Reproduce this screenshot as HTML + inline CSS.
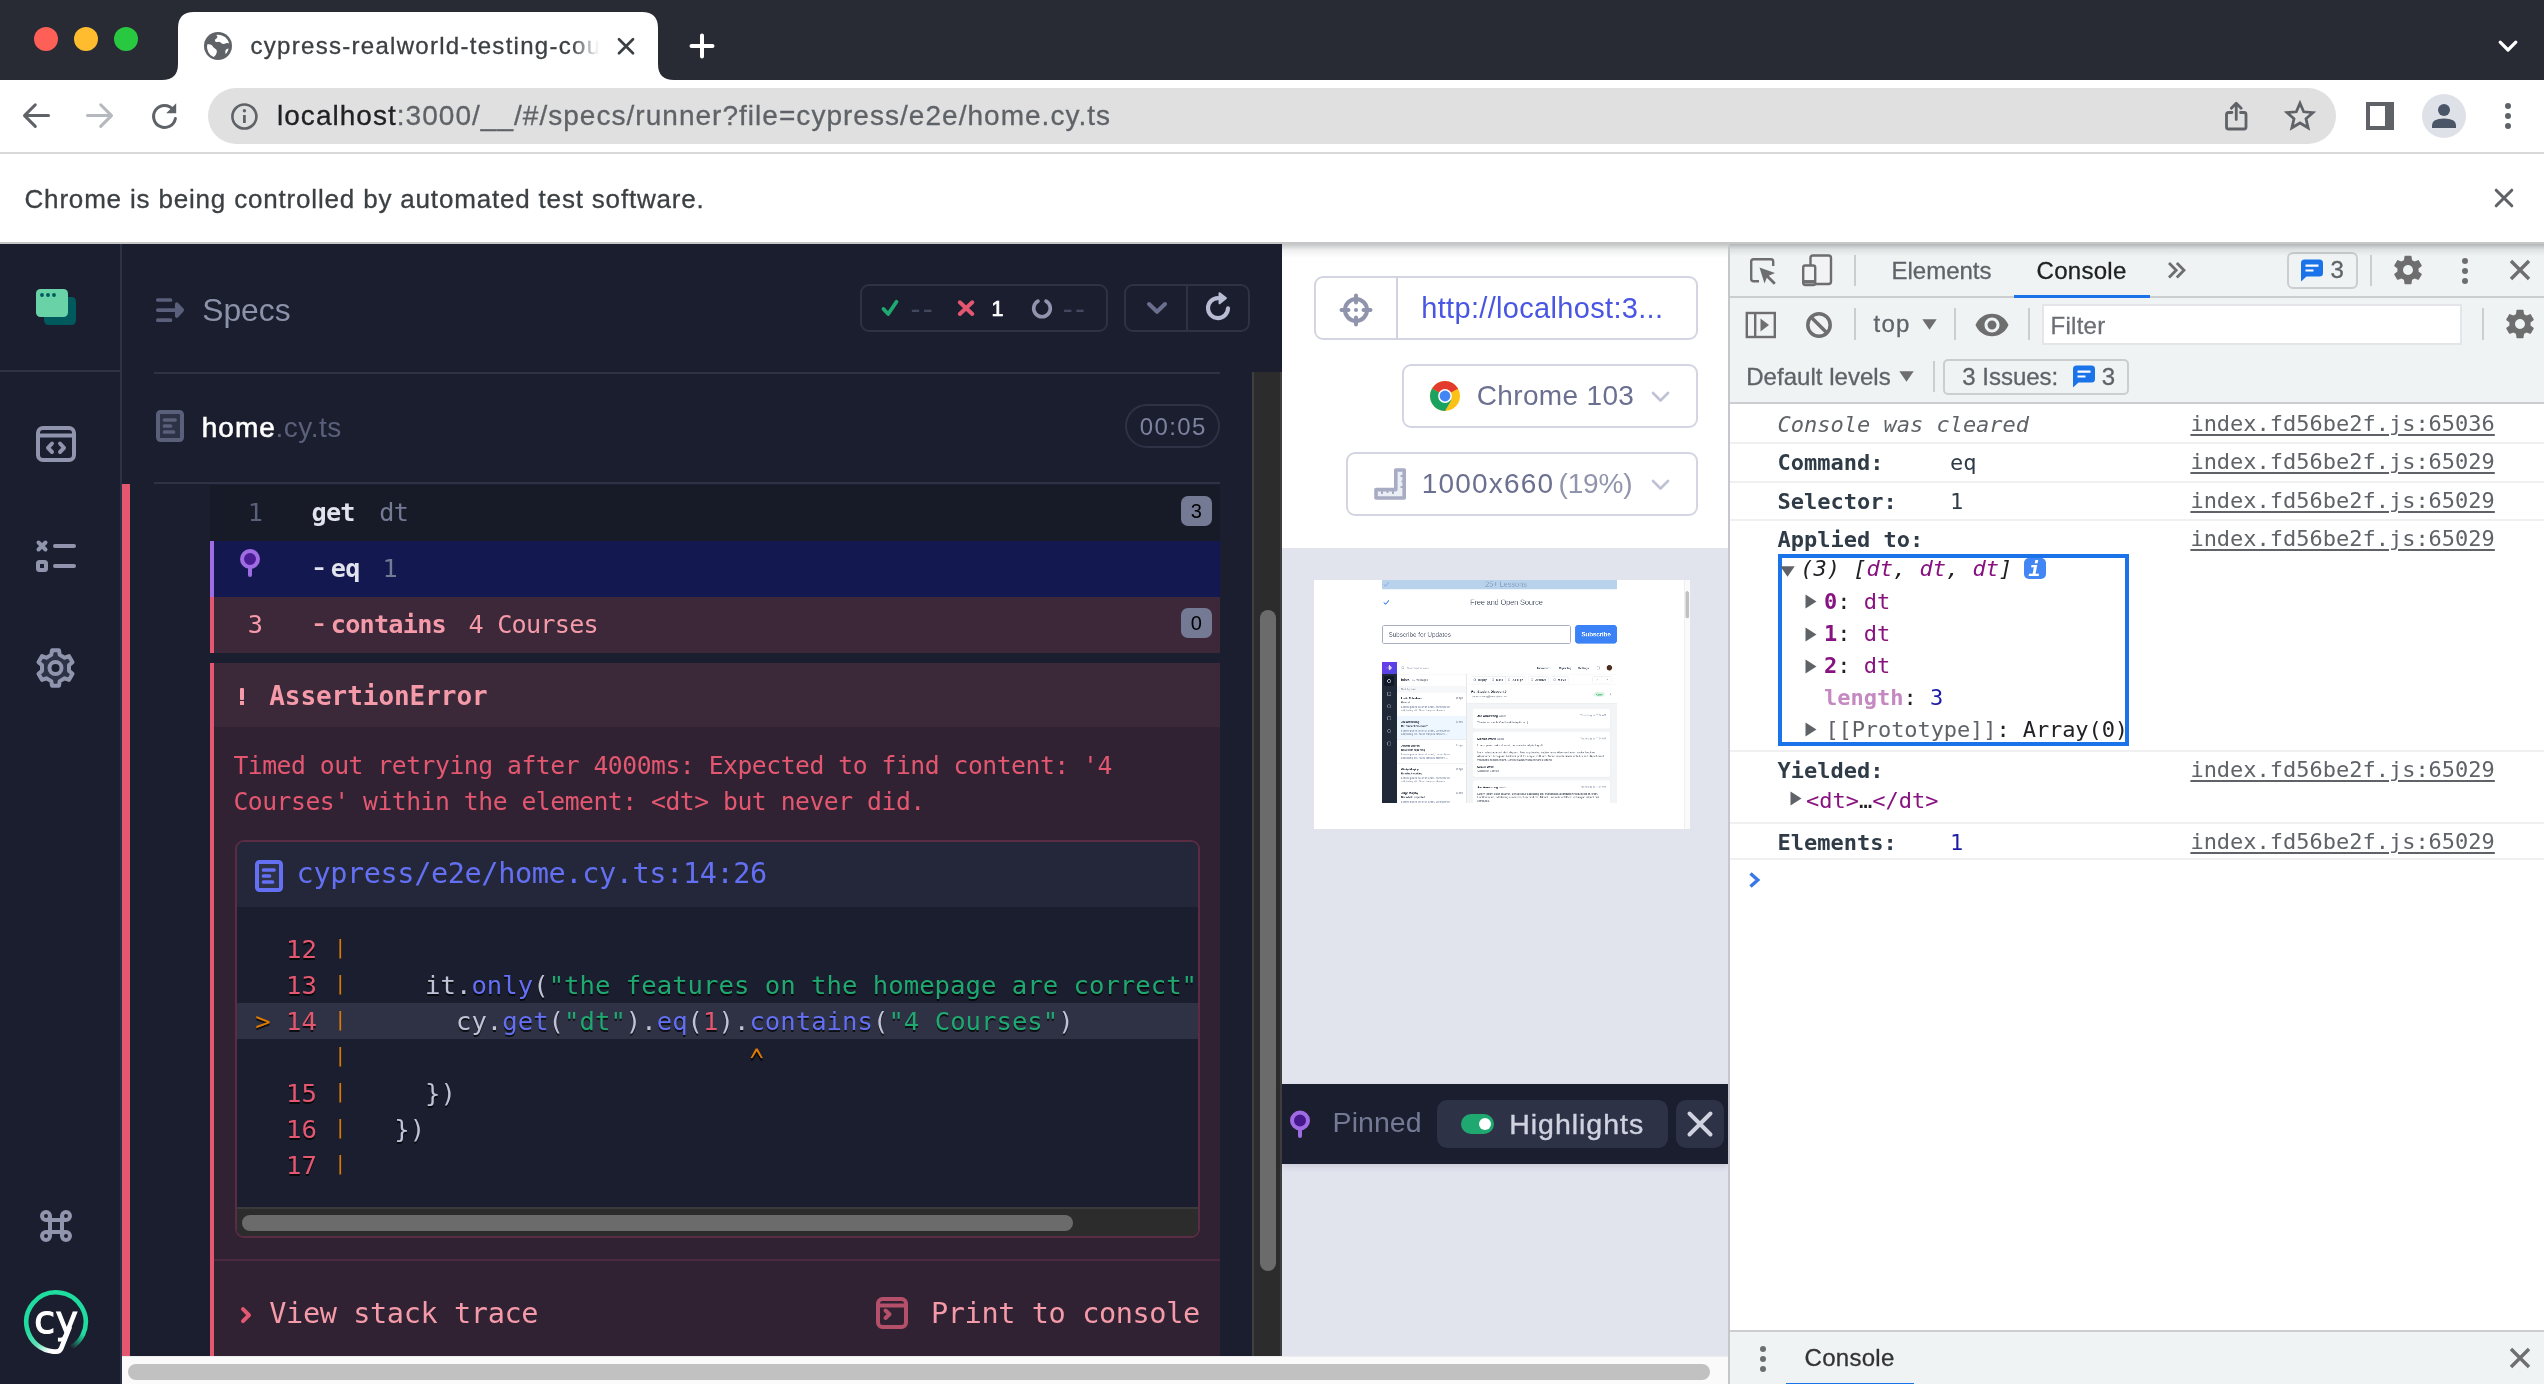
<!DOCTYPE html>
<html lang="en">
<head>
<meta charset="utf-8">
<title>cypress-realworld-testing-course</title>
<style>
*{box-sizing:border-box;margin:0;padding:0}
html,body{width:2544px;height:1384px;overflow:hidden;background:#fff}
body{font-family:"Liberation Sans",Arial,sans-serif;color:#202124}
#root{position:absolute;left:0;top:0;width:2544px;height:1384px;overflow:hidden;will-change:transform;transform:translateZ(0)}
#root div,#root span,#root svg,#root a,#root section,#root header,#root nav,#root aside,#root main,#root footer,#root ul,#root li,#root pre,#root code,#root button,#root h1,#root h2,#root p{position:absolute;display:block}
#root button{border:0;background:none;font:inherit}
.t{white-space:pre;line-height:1;font-weight:400}
.mono{font-family:"DejaVu Sans Mono","Liberation Mono",monospace}
.lmono{font-family:"Liberation Mono","DejaVu Sans Mono",monospace}
.dsans{font-family:"DejaVu Sans","Liberation Sans",sans-serif}
.t span,.t b,.t i{position:static !important;display:inline !important}
.t span.pipe{position:relative !important;font-size:20px;letter-spacing:3.4px;left:1.7px;top:-3.9px;text-shadow:none}
.t span.caret{position:relative !important;display:inline-block !important;top:5.5px;transform:scale(0.9,1.4)}
</style>
</head>
<body>
<div id="root">
<!-- ===== Browser chrome ===== -->
<header id="browser" style="left:0;top:0;width:2544px;height:244px">
<div style="left:0px;top:0px;width:2544px;height:80px;background:#282a34;"></div>
<svg style="left:150px;top:0px;" width="540" height="80" viewBox="0 0 540 80"><path d="M12 80 Q28 80 28 64 L28 28 Q28 12 44 12 L492 12 Q508 12 508 28 L508 64 Q508 80 524 80 Z" fill="#fff"/></svg>
<div style="left:34px;top:27px;width:24px;height:24px;background:#fe5f57;border-radius:50%;"></div>
<div style="left:74px;top:27px;width:24px;height:24px;background:#febc2e;border-radius:50%;"></div>
<div style="left:114px;top:27px;width:24px;height:24px;background:#28c840;border-radius:50%;"></div>
<svg style="left:204px;top:32px;" width="28" height="28" viewBox="0 0 28 28"><circle cx="14" cy="14" r="14" fill="#5f6368"/><path d="M3.2 12.5c2.6-.6 4.6.3 5.6 2.1.9 1.7 2.6 1.9 3.6 3.2 1 1.4.2 3.4-.6 4.9-.5 1-1.2 1.8-2.2 2.4A11.3 11.3 0 0 1 3.2 12.5Z" fill="#fff"/><path d="M11.5 3c1.7.2 2.3 1.6 1.6 2.8-.7 1.2-2.2 1.3-2.2 2.7 0 1.5 2 1.7 3.5 1.4 1.6-.3 2.3.9 3.4 1.7 1.2.9 3 .4 4.300-.3 1.2-.6 2.300-.5 3 .1A11.300 11.300 0 0 0 11.5 3Z" fill="#fff"/><path d="M24.6 16.5c-1.500.2-2.800.9-3.200 2.200-.4 1.300.3 2.300.1 3.500 1.600-1.500 2.700-3.500 3.100-5.700Z" fill="#fff"/></svg>
<span class="t" style="left:250.5px;top:33.98px;font-size:24px;color:#3c4043;letter-spacing:1.29px;-webkit-text-stroke:0.300px #3c4043;">cypress-realworld-testing-cou</span>
<div style="left:572px;top:20px;width:32px;height:52px;background:linear-gradient(90deg,rgba(255,255,255,0),#fff 85%);"></div>
<svg style="left:616px;top:36px;" width="20" height="20" viewBox="0 0 20 20"><path d="M3 3.300 L17 17.300 M17 3.300 L3 17.300" stroke="#3c4043" stroke-width="2.700" fill="none" stroke-linecap="round"/></svg>
<svg style="left:688px;top:32px;" width="28" height="28" viewBox="0 0 28 28"><path d="M14 3.500 V24.500 M3.500 14 H24.500" stroke="#fff" stroke-width="4" fill="none" stroke-linecap="round"/></svg>
<svg style="left:2496px;top:38px;" width="24" height="18" viewBox="0 0 24 18"><path d="M4.200 4.200 L12 12 L19.800 4.200" stroke="#fff" stroke-width="3.200" fill="none" stroke-linecap="round" stroke-linejoin="round"/></svg>
<div style="left:0px;top:80px;width:2544px;height:72px;background:#fff;"></div>
<div style="left:0px;top:152px;width:2544px;height:2px;background:#d9d9d9;"></div>
<svg style="left:20px;top:100px;" width="32" height="32" viewBox="0 0 32 32"><path d="M28.500 15.600 H5 M15.300 4.800 L4.500 15.600 L15.300 26.400" stroke="#5f6368" stroke-width="3" fill="none" stroke-linecap="round" stroke-linejoin="round"/></svg>
<svg style="left:84px;top:100px;" width="32" height="32" viewBox="0 0 32 32"><path d="M3.500 15.600 H27 M16.700 4.800 L27.500 15.600 L16.700 26.400" stroke="#b5b8bc" stroke-width="3" fill="none" stroke-linecap="round" stroke-linejoin="round"/></svg>
<svg style="left:148px;top:100px;" width="34" height="34" viewBox="0 0 34 34"><path d="M25.200 9.600 A11 11 0 1 0 27.400 18.500" stroke="#5f6368" stroke-width="3" fill="none" stroke-linecap="round"/><path d="M28.200 3.200 V13.200 H18.200 Z" fill="#5f6368"/></svg>
<div style="left:208px;top:88px;width:2128px;height:56px;background:#e0e0e0;border-radius:28px;"></div>
<svg style="left:229px;top:101px;" width="31" height="31" viewBox="0 0 31 31"><circle cx="15.400" cy="15.500" r="12" stroke="#5f6368" stroke-width="2.600" fill="none"/><path d="M15.400 14 V22" stroke="#5f6368" stroke-width="2.800"/><circle cx="15.400" cy="9.800" r="1.700" fill="#5f6368"/></svg>
<span class="t" style="left:277px;top:102.1px;font-size:28px;color:#5f6368;letter-spacing:1.03px;-webkit-text-stroke:0.300px;"><span style="color:#202124">localhost</span>:3000/__/#/specs/runner?file=cypress/e2e/home.cy.ts</span>
<svg style="left:2222px;top:100px;" width="30" height="32" viewBox="0 0 30 32"><path d="M10 12.500 H6.500 Q4.500 12.500 4.500 14.500 V27 Q4.500 29 6.500 29 H22 Q24 29 24 27 V14.500 Q24 12.500 22 12.500 H18.500" stroke="#5f6368" stroke-width="2.800" fill="none" stroke-linecap="round"/><path d="M14.250 19.500 V4 M9.300 8.300 L14.250 3.300 L19.200 8.300" stroke="#5f6368" stroke-width="2.800" fill="none" stroke-linecap="round" stroke-linejoin="round"/></svg>
<svg style="left:2284px;top:100px;" width="32" height="32" viewBox="0 0 32 32"><path d="M16 3.200 L19.700 11.800 L29 12.600 L22 18.700 L24.100 27.800 L16 23 L7.900 27.800 L10 18.700 L3 12.600 L12.300 11.800 Z" stroke="#5f6368" stroke-width="2.800" fill="none" stroke-linejoin="miter"/></svg>
<div style="left:2366px;top:102px;width:28px;height:28px;background:#5f6368;"></div>
<div style="left:2370px;top:106px;width:14.5px;height:20px;background:#fff;"></div>
<div style="left:2422px;top:94px;width:44px;height:44px;background:#dfe1e8;border-radius:50%;"></div>
<svg style="left:2422px;top:94px;" width="44" height="44" viewBox="0 0 44 44"><circle cx="22" cy="16" r="6" fill="#4a5568"/><path d="M10 34 V31 Q10 24.500 22 24.500 Q34 24.500 34 31 V34 Z" fill="#4a5568"/></svg>
<div style="left:2505px;top:103px;width:6px;height:6px;background:#5f6368;border-radius:50%;"></div>
<div style="left:2505px;top:113px;width:6px;height:6px;background:#5f6368;border-radius:50%;"></div>
<div style="left:2505px;top:123px;width:6px;height:6px;background:#5f6368;border-radius:50%;"></div>
<div style="left:0px;top:154px;width:2544px;height:88px;background:#fff;"></div>
<span class="t" style="left:24.5px;top:185.99px;font-size:26px;color:#3c4043;letter-spacing:0.82px;-webkit-text-stroke:0.300px #3c4043;">Chrome is being controlled by automated test software.</span>
<svg style="left:2492px;top:186px;" width="24" height="24" viewBox="0 0 24 24"><path d="M4.200 4.200 L19.800 19.800 M19.800 4.200 L4.200 19.800" stroke="#5f6368" stroke-width="3" fill="none" stroke-linecap="round"/></svg>
<div style="left:0px;top:242px;width:2544px;height:2px;background:#c6c6c6;"></div>
</header>
<!-- ===== Cypress app ===== -->
<main id="cy-reporter" style="left:0;top:0;width:1282px;height:1356px">
<div style="left:122px;top:244px;width:1160px;height:1112px;background:#1b1e2e;"></div>
<svg style="left:152px;top:294px;" width="36" height="32" viewBox="0 0 36 32"><path d="M5.800 6 H18.500 M5.800 26.200 H18.500 M5.800 16.100 H29" stroke="#5a5f7a" stroke-width="3.700" stroke-linecap="round" fill="none"/><path d="M24.800 10.200 L30.300 16.100 L24.800 22 Z" stroke="#5a5f7a" stroke-width="3.700" stroke-linecap="round" stroke-linejoin="round" fill="#5a5f7a"/></svg>
<span class="t" style="left:202.2px;top:295.28px;font-size:31.8px;color:#8d92ab;letter-spacing:0.02px;">Specs</span>
<div style="left:860px;top:284px;width:248px;height:48px;border:2px solid #2e3247;border-radius:9px;"></div>
<svg style="left:878px;top:296px;" width="24" height="24" viewBox="0 0 24 24"><path d="M5.500 13 L10.200 18 L18.500 5.800" stroke="#1fa971" stroke-width="3.800" fill="none" stroke-linecap="round" stroke-linejoin="round"/></svg>
<span class="t" style="left:910.6px;top:294px;font-size:30px;color:#434861;letter-spacing:2.2px;">--</span>
<svg style="left:954px;top:296px;" width="24" height="24" viewBox="0 0 24 24"><path d="M5.800 6.300 L18.300 18 M18.300 6.300 L5.800 18" stroke="#e45770" stroke-width="4" fill="none" stroke-linecap="round"/></svg>
<span class="t" style="left:991.6px;top:298.9px;font-size:21.5px;color:#fff;-webkit-text-stroke:0.700px #fff;">1</span>
<svg style="left:1030px;top:296px;" width="24" height="24" viewBox="0 0 24 24"><path d="M8 5.200 A8.300 8.300 0 1 0 16 5.200" stroke="#9095ad" stroke-width="3.600" fill="none" stroke-linecap="round"/></svg>
<span class="t" style="left:1062.8px;top:294px;font-size:30px;color:#434861;letter-spacing:2.2px;">--</span>
<div style="left:1124px;top:284px;width:126px;height:48px;border:2px solid #2e3247;border-radius:9px;"></div>
<div style="left:1186px;top:286px;width:2px;height:44px;background:#2e3247;"></div>
<svg style="left:1144px;top:296px;" width="26" height="24" viewBox="0 0 26 24"><path d="M5 8 L13 15.800 L21 8" stroke="#6a6f8d" stroke-width="4" fill="none" stroke-linecap="round" stroke-linejoin="round"/></svg>
<svg style="left:1202px;top:290px;" width="34" height="34" viewBox="0 0 34 34"><path d="M16 8.100 A10 10 0 1 0 26 18.300" stroke="#b8bcd4" stroke-width="4.100" fill="none" stroke-linecap="round"/><path d="M17.600 3.400 L23.800 8.100 L17.600 13.200 Z" fill="#b8bcd4" stroke="#b8bcd4" stroke-width="2.200" stroke-linejoin="round"/></svg>
<div style="left:154px;top:372px;width:1066px;height:2px;background:#2e3247;"></div>
<svg style="left:154px;top:408px;" width="32" height="36" viewBox="0 0 32 36"><rect x="4" y="4" width="24" height="28" rx="2.500" stroke="#5a5f7a" stroke-width="4" fill="#2e3247"/><path d="M10.500 12 H21 M10.500 18 H16.500 M10.500 24 H19.500" stroke="#5a5f7a" stroke-width="3.700" stroke-linecap="round"/></svg>
<span class="t" style="left:201.8px;top:414.1px;font-size:28px;color:#fff;letter-spacing:0.99px;-webkit-text-stroke:0.600px #fff;">home</span>
<span class="t" style="left:275.6px;top:414.1px;font-size:28px;color:#5a5f7a;letter-spacing:0.46px;">.cy.ts</span>
<div style="left:1125px;top:404px;width:95px;height:44px;border:2px solid #2e3247;border-radius:22px;"></div>
<span class="t" style="left:1139.8px;top:414.58px;font-size:24px;color:#7d829f;letter-spacing:1.39px;">00:05</span>
<div style="left:154px;top:482px;width:1066px;height:2px;background:#2e3247;"></div>
<div style="left:122px;top:484px;width:8px;height:872px;background:#e45770;"></div>
<div style="left:210px;top:485px;width:1010px;height:56px;background:#171a27;"></div>
<span class="t mono" style="left:247.8px;top:499.98px;font-size:25.2px;color:#5a5f7a;letter-spacing:-0.77px;">1</span>
<span class="t mono" style="left:311.5px;top:499.98px;font-size:25.2px;color:#e1e3ed;font-weight:700;letter-spacing:-0.77px;">get</span>
<span class="t mono" style="left:379.3px;top:499.98px;font-size:25.2px;color:#747994;letter-spacing:-0.77px;">dt</span>
<div style="left:1181px;top:495.6px;width:31px;height:30px;background:#747994;border-radius:7px;"></div>
<span class="t" style="left:1190.8px;top:500.57px;font-size:20px;color:#000;">3</span>
<div style="left:210px;top:541px;width:1010px;height:56px;background:#141850;"></div>
<div style="left:210px;top:541px;width:4px;height:56px;background:#a06ce4;"></div>
<svg style="left:236px;top:545px;" width="28" height="36" viewBox="0 0 28 36"><circle cx="14" cy="14" r="8" stroke="#a06ce4" stroke-width="4" fill="#4b1d94"/><path d="M14 24 V30" stroke="#a06ce4" stroke-width="4" stroke-linecap="round"/></svg>
<span class="t mono" style="left:309px;top:549.86px;font-size:33.5px;color:#e1e3ed;">-</span>
<span class="t mono" style="left:330.8px;top:555.98px;font-size:25.2px;color:#e1e3ed;font-weight:700;letter-spacing:-0.77px;">eq</span>
<span class="t mono" style="left:382.6px;top:555.98px;font-size:25.2px;color:#747994;letter-spacing:-0.77px;">1</span>
<div style="left:210px;top:597px;width:1010px;height:56px;background:#3c2839;"></div>
<div style="left:210px;top:597px;width:4px;height:56px;background:#e45770;"></div>
<span class="t mono" style="left:247.8px;top:611.98px;font-size:25.2px;color:#f59aa9;letter-spacing:-0.77px;">3</span>
<span class="t mono" style="left:309px;top:605.86px;font-size:33.5px;color:#f59aa9;">-</span>
<span class="t mono" style="left:330.8px;top:611.98px;font-size:25.2px;color:#f59aa9;font-weight:700;letter-spacing:-0.77px;">contains</span>
<span class="t mono" style="left:468.4px;top:611.98px;font-size:25.2px;color:#f59aa9;letter-spacing:-0.77px;">4 Courses</span>
<div style="left:1181px;top:607.6px;width:31px;height:30px;background:#747994;border-radius:7px;"></div>
<span class="t" style="left:1190.8px;top:612.57px;font-size:20px;color:#000;">0</span>
<section id="cy-error" style="left:210px;top:663px;width:1010px;height:693px">
<div style="left:0px;top:0px;width:1010px;height:64px;background:#3b2839;"></div>
<div style="left:0px;top:64px;width:1010px;height:629px;background:#302232;"></div>
<div style="left:0px;top:0px;width:4px;height:693px;background:#e45770;"></div>
<div style="left:30.2px;top:25.2px;width:4.2px;height:11.5px;background:#f59aa9;border-radius:1px;"></div>
<div style="left:30.2px;top:38.4px;width:4.2px;height:3.6px;background:#f59aa9;"></div>
<span class="t mono" style="left:59.2px;top:19.8px;font-size:26px;color:#f59aa9;font-weight:700;letter-spacing:-0.05px;">AssertionError</span>
<p class="t mono" style="left:23.4px;top:91.09px;font-size:24.72px;color:#e45770;letter-spacing:-0.48px;">Timed out retrying after 4000ms: Expected to find content: '4</p>
<p class="t mono" style="left:23.4px;top:127.19px;font-size:24.72px;color:#e45770;letter-spacing:-0.48px;">Courses' within the element: &lt;dt&gt; but never did.</p>
<div style="left:4px;top:596px;width:1006px;height:2px;background:#4b2a41;"></div>
<svg style="left:24px;top:640px;" width="24" height="24" viewBox="0 0 24 24"><path d="M9 6.200 L15 12.200 L9 18.200" stroke="#e45770" stroke-width="4" fill="none" stroke-linecap="round" stroke-linejoin="round"/></svg>
<span class="t mono" style="left:59.3px;top:635.84px;font-size:28.56px;color:#f59aa9;letter-spacing:-0.39px;">View stack trace</span>
<svg style="left:664px;top:632px;" width="36" height="36" viewBox="0 0 36 36"><rect x="4" y="4" width="28" height="28" rx="4.500" stroke="#b5506a" stroke-width="4" fill="none"/><path d="M4 10.500 H32" stroke="#b5506a" stroke-width="4"/><path d="M11.500 15.500 L15.500 19.300 L11.500 23" stroke="#b5506a" stroke-width="4" fill="none" stroke-linecap="round" stroke-linejoin="round"/></svg>
<span class="t mono" style="left:721px;top:636.24px;font-size:28.56px;color:#f59aa9;letter-spacing:-0.39px;">Print to console</span>
</section>
<section id="cy-codeframe" style="left:235px;top:840px;width:965px;height:398px;border:2px solid #5a2d45;border-radius:9px;overflow:hidden;background:#1b1e2e">
<div style="left:0px;top:0px;width:961px;height:65px;background:#242739;"></div>
<svg style="left:16px;top:16px;" width="32" height="36" viewBox="0 0 32 36"><rect x="4" y="4" width="24" height="28" rx="2.500" stroke="#6470f3" stroke-width="4" fill="#2e3247"/><path d="M10.500 12 H21 M10.500 18 H16.500 M10.500 24 H19.500" stroke="#6470f3" stroke-width="3.700" stroke-linecap="round"/></svg>
<span class="t mono" style="left:59.6px;top:17.14px;font-size:28.56px;color:#6470f3;letter-spacing:-0.39px;">cypress/e2e/home.cy.ts:14:26</span>
<pre style="left:0;top:65px;width:961px;height:300px;overflow:hidden">
<div style="left:0px;top:96px;width:961px;height:36px;background:#2f3244;"></div>
<code class="t mono" style="left:18.2px;top:29.53px;font-size:25.61px;color:#bfc3d6;letter-spacing:0.02px;text-shadow:0 2px 0 rgba(0,0,0,0.700);"><span style="color:#db7903"> </span> <span style="color:#e45770">12</span> <span class="pipe" style="color:#db7903">|</span></code>
<code class="t mono" style="left:18.2px;top:65.53px;font-size:25.61px;color:#bfc3d6;letter-spacing:0.02px;text-shadow:0 2px 0 rgba(0,0,0,0.700);"><span style="color:#db7903"> </span> <span style="color:#e45770">13</span> <span class="pipe" style="color:#db7903">|</span>     it.<span style="color:#6470f3">only</span>(<span style="color:#1fa971">"the features on the homepage are correct"</span>, () =&gt; {</code>
<code class="t mono" style="left:18.2px;top:101.53px;font-size:25.61px;color:#bfc3d6;letter-spacing:0.02px;text-shadow:0 2px 0 rgba(0,0,0,0.700);"><span style="color:#db7903">&gt;</span> <span style="color:#e45770">14</span> <span class="pipe" style="color:#db7903">|</span>       cy.<span style="color:#6470f3">get</span>(<span style="color:#1fa971">"dt"</span>).<span style="color:#6470f3">eq</span>(<span style="color:#e45770">1</span>).<span style="color:#6470f3">contains</span>(<span style="color:#1fa971">"4 Courses"</span>)</code>
<code class="t mono" style="left:18.2px;top:137.53px;font-size:25.61px;color:#bfc3d6;letter-spacing:0.02px;text-shadow:0 2px 0 rgba(0,0,0,0.700);"><span style="color:#db7903"> </span> <span style="color:#e45770">  </span> <span class="pipe" style="color:#db7903">|</span>                          <span class="caret" style="color:#db7903">^</span></code>
<code class="t mono" style="left:18.2px;top:173.53px;font-size:25.61px;color:#bfc3d6;letter-spacing:0.02px;text-shadow:0 2px 0 rgba(0,0,0,0.700);"><span style="color:#db7903"> </span> <span style="color:#e45770">15</span> <span class="pipe" style="color:#db7903">|</span>     })</code>
<code class="t mono" style="left:18.2px;top:209.53px;font-size:25.61px;color:#bfc3d6;letter-spacing:0.02px;text-shadow:0 2px 0 rgba(0,0,0,0.700);"><span style="color:#db7903"> </span> <span style="color:#e45770">16</span> <span class="pipe" style="color:#db7903">|</span>   })</code>
<code class="t mono" style="left:18.2px;top:245.53px;font-size:25.61px;color:#bfc3d6;letter-spacing:0.02px;text-shadow:0 2px 0 rgba(0,0,0,0.700);"><span style="color:#db7903"> </span> <span style="color:#e45770">17</span> <span class="pipe" style="color:#db7903">|</span></code>
</pre>
<div style="left:0px;top:365px;width:961px;height:31px;background:#2c2c2c;border-top:2px solid #3a3a3a;"></div>
<div style="left:4.8px;top:373px;width:831.5px;height:16px;background:#6b6b6b;border-radius:8px;"></div>
</section>
<div style="left:1252px;top:372px;width:30px;height:984px;background:#2c2c2c;border-left:2px solid #3f3f3f;border-right:2px solid #3f3f3f;"></div>
<div style="left:1260px;top:610px;width:16px;height:661px;background:#6b6b6b;border-radius:8px;"></div>
</main>
<nav id="cy-sidebar" style="left:0;top:244px;width:122px;height:1140px">
<div style="left:0px;top:0px;width:122px;height:1140px;background:#1b1e2e;"></div>
<div style="left:120px;top:0px;width:2px;height:1140px;background:#2e3247;"></div>
<div style="left:0px;top:126px;width:120px;height:2px;background:#2e3247;"></div>
<svg style="left:34px;top:43px;" width="44" height="40" viewBox="0 0 44 40"><rect x="10" y="10" width="32" height="28" rx="4.500" fill="#00595d"/><rect x="2" y="2" width="32" height="28" rx="4.500" fill="#69d3a7"/><circle cx="8" cy="8" r="1.900" fill="#00595d"/><circle cx="14" cy="8" r="1.900" fill="#00595d"/><circle cx="20" cy="8" r="1.900" fill="#00595d"/></svg>
<svg style="left:34px;top:180px;" width="44" height="40" viewBox="0 0 44 40"><rect x="4" y="4" width="36" height="32" rx="5" stroke="#9095ad" stroke-width="4" fill="none"/><path d="M4 11.500 H40" stroke="#9095ad" stroke-width="4"/><path d="M18 19.500 L14 23.800 L18 28 M26 19.500 L30 23.800 L26 28" stroke="#9095ad" stroke-width="4" fill="none" stroke-linecap="round" stroke-linejoin="round"/></svg>
<svg style="left:32px;top:292px;" width="48" height="40" viewBox="0 0 48 40"><path d="M6.500 6.500 L13.500 13.500 M13.500 6.500 L6.500 13.500" stroke="#9095ad" stroke-width="4" stroke-linecap="round"/><path d="M23 10 H42 M23 30 H42" stroke="#9095ad" stroke-width="4" stroke-linecap="round"/><rect x="6" y="26" width="8" height="8" rx="1.500" stroke="#9095ad" stroke-width="4" fill="none"/></svg>
<svg style="left:32px;top:400px;" width="48" height="48" viewBox="0 0 48 48"><path d="M19.24 10.88 L20.02 6.34 L26.98 6.34 L27.76 10.88 L32.73 13.74 L37.05 12.15 L40.54 18.19 L37.00 21.13 L37.00 26.87 L40.54 29.81 L37.05 35.85 L32.73 34.26 L27.76 37.12 L26.98 41.66 L20.02 41.66 L19.24 37.12 L14.27 34.26 L9.95 35.85 L6.46 29.81 L10.00 26.87 L10.00 21.13 L6.46 18.19 L9.95 12.15 L14.27 13.74 Z" stroke="#9095ad" stroke-width="4" stroke-linejoin="round" fill="#2e3247"/><circle cx="23.500" cy="24" r="6" stroke="#9095ad" stroke-width="4" fill="#1b1e2e"/></svg>
<svg style="left:36px;top:962px;" width="40" height="40" viewBox="0 0 40 40"><g stroke="#9095ad" stroke-width="4" fill="none"><circle cx="10" cy="10" r="4"/><circle cx="30" cy="10" r="4"/><circle cx="10" cy="30" r="4"/><circle cx="30" cy="30" r="4"/><path d="M14 10 V30 M26 10 V30 M10 14 H30 M10 26 H30"/></g></svg>
<svg style="left:20px;top:1042px;" width="72" height="72" viewBox="0 0 72 72"><defs><linearGradient id="cyg" gradientUnits="userSpaceOnUse" x1="7.300" y1="43.700" x2="33.400" y2="65.600"><stop offset="0" stop-color="#1fdc9f"/><stop offset="0.500" stop-color="#62dfb4"/><stop offset="0.900" stop-color="#fff"/></linearGradient><linearGradient id="cyf" gradientUnits="userSpaceOnUse" x1="62.900" y1="48.500" x2="50.800" y2="61.700"><stop offset="0" stop-color="#1fdc9f"/><stop offset="1" stop-color="#1fdc9f" stop-opacity="0"/></linearGradient></defs><path d="M7.310 43.690 A29.700 29.700 0 1 1 62.920 48.550" stroke="#1fdc9f" stroke-width="4.600" fill="none"/><path d="M7.100 42.900 A29.700 29.700 0 0 0 33.400 65.600" stroke="url(#cyg)" stroke-width="4.600" fill="none"/><path d="M63.200 47.800 A29.700 29.700 0 0 1 50.850 61.720" stroke="url(#cyf)" stroke-width="4.600" fill="none"/><path d="M49.800 40.500 L41.300 62.200 Q39.800 65.900 35.800 65.600 H32.500" stroke="#fff" stroke-width="4.800" fill="none"/></svg>
<span class="t dsans" style="left:34.3px;top:1056.55px;font-size:38px;color:#fff;letter-spacing:0.4px;-webkit-text-stroke:1.100px #fff;">cy</span>
</nav>
<!-- ===== Cypress AUT panel ===== -->
<section id="cy-aut-panel" style="left:0;top:0;width:1730px;height:1384px">
<div style="left:1282px;top:244px;width:446px;height:304px;background:#fff;"></div>
<div style="left:1282px;top:548px;width:446px;height:808px;background:#e1e3ed;"></div>
<div style="left:1314px;top:276px;width:384px;height:64px;background:#fff;border:2px solid #d3d5e2;border-radius:9px;"></div>
<div style="left:1396px;top:278px;width:2px;height:60px;background:#d0d2e0;"></div>
<svg style="left:1338px;top:292px;" width="36" height="36" viewBox="0 0 36 36"><circle cx="18" cy="18" r="11" stroke="#9095ad" stroke-width="4" fill="none"/><path d="M18 3.500 V10.500 M18 25.500 V32.500 M3.500 18 H10.500 M25.500 18 H32.500" stroke="#9095ad" stroke-width="4" stroke-linecap="round"/><circle cx="18" cy="18" r="2" fill="#9095ad"/></svg>
<span class="t" style="left:1421.3px;top:294.05px;font-size:29px;color:#4956e3;letter-spacing:0.32px;">http://localhost:3...</span>
<div style="left:1402px;top:364px;width:296px;height:64px;background:#fff;border:2px solid #d3d5e2;border-radius:9px;"></div>
<svg style="left:1430px;top:381px;" width="30" height="30" viewBox="0 0 30 30"><circle cx="15" cy="15" r="15" fill="#fbc116"/><path d="M15 15 L2.010 7.500 A15 15 0 0 1 27.990 7.500 Z" fill="#e33b2e"/><path d="M15 15 L2.010 7.500 A15 15 0 0 0 15 30 L21.500 18.750 Z" fill="#1aa260"/><path d="M15 8.200 H27.600 A15 15 0 0 0 27.990 7.500 L15 7.500 Z" fill="#e33b2e"/><circle cx="15" cy="15" r="6.900" fill="#fff"/><circle cx="15" cy="15" r="5.400" fill="#4285f4"/></svg>
<span class="t" style="left:1476.8px;top:382.1px;font-size:28px;color:#6b7090;letter-spacing:0.34px;">Chrome 103</span>
<svg style="left:1649.5px;top:387.5px;" width="21" height="17" viewBox="0 0 21 17"><path d="M3 5 L10.500 12.500 L18 5" stroke="#bfc2d4" stroke-width="2.600" fill="none" stroke-linecap="round" stroke-linejoin="round"/></svg>
<div style="left:1346px;top:452px;width:352px;height:64px;background:#fff;border:2px solid #d3d5e2;border-radius:9px;"></div>
<svg style="left:1372px;top:466px;" width="36" height="36" viewBox="0 0 36 36"><path d="M23.800 4 H32.200 V32 H4 V23.600 H23.800 Z" stroke="#a7acc4" stroke-width="3.600" stroke-linejoin="round" fill="#eceef5"/><path d="M10 24 V28 M15.500 24 V27 M21 24 V28 M28.500 10 H32 M29.500 15.500 H32 M28.500 21 H32" stroke="#a7acc4" stroke-width="2"/></svg>
<span class="t" style="left:1421.8px;top:470.2px;font-size:28px;color:#6b7090;letter-spacing:1.19px;">1000x660</span>
<span class="t" style="left:1558.5px;top:470.2px;font-size:28px;color:#9095ad;letter-spacing:-0.14px;">(19%)</span>
<svg style="left:1649.5px;top:475.5px;" width="21" height="17" viewBox="0 0 21 17"><path d="M3 5 L10.500 12.500 L18 5" stroke="#bfc2d4" stroke-width="2.600" fill="none" stroke-linecap="round" stroke-linejoin="round"/></svg>
<section id="aut" style="left:1314px;top:580px;width:1000px;height:662px;background:#fff;transform:scale(0.376);transform-origin:0 0;overflow:hidden;font-family:'Liberation Sans',Arial,sans-serif">
<div style="left:985px;top:0px;width:15px;height:662px;background:#fafafa;border-left:1px solid #ececec;"></div>
<div style="left:988px;top:30px;width:9px;height:72px;background:#c1c1c1;border-radius:5px;"></div>
<div style="left:181px;top:0px;width:624px;height:25px;background:#b9d2ec;"></div>
<svg style="left:184px;top:4px;" width="17" height="16" viewBox="0 0 17 16"><path d="M2 8 L6.500 12.500 L14.500 3" stroke="#8db4e8" stroke-width="2.400" fill="none" stroke-linecap="round" stroke-linejoin="round"/></svg>
<span class="t" style="left:455px;top:0.57px;font-size:20px;color:#8ea6c6;letter-spacing:-0.27px;">25+ Lessons</span>
<svg style="left:184px;top:52px;" width="17" height="16" viewBox="0 0 17 16"><path d="M2 8 L6.500 12.500 L14.500 3" stroke="#3b82f6" stroke-width="2.400" fill="none" stroke-linecap="round" stroke-linejoin="round"/></svg>
<span class="t" style="left:415px;top:49.37px;font-size:20px;color:#6b7280;letter-spacing:-0.52px;">Free and Open Source</span>
<div style="left:181px;top:120px;width:502px;height:50px;background:#fff;border:2px solid #a9afc0;border-radius:6px;"></div>
<span class="t" style="left:198px;top:136.61px;font-size:17px;color:#6b7280;letter-spacing:-0.1px;">Subscribe for Updates</span>
<div style="left:695px;top:120px;width:110px;height:49px;background:#3b82f6;border-radius:6px;"></div>
<span class="t" style="left:711px;top:135.61px;font-size:17px;color:#fff;font-weight:700;letter-spacing:-0.47px;">Subscribe</span>
<div id="aut-shot" style="left:181px;top:218px;width:1248px;height:750px;transform:scale(0.5);transform-origin:0 0;overflow:hidden;background:#fff">
<div style="left:0px;top:0px;width:78px;height:63px;background:linear-gradient(135deg,#6d3be8,#4f46e5);"></div>
<div style="left:0px;top:63px;width:78px;height:687px;background:#1f2937;"></div>
<svg style="left:22px;top:14px;" width="34" height="34" viewBox="0 0 34 34"><path d="M17 5 V29 M10 9 V25 M24 9 V25 M4.500 14 V20 M29.500 14 V20" stroke="#fff" stroke-width="3.200" stroke-linecap="round"/></svg>
<div style="left:11px;top:75px;width:53px;height:52px;background:#111827;border-radius:8px;"></div>
<div style="left:27px;top:91px;width:21px;height:21px;border:3.500px solid #c3c9d4;border-radius:50%;"></div>
<div style="left:27px;top:159px;width:21px;height:21px;border:3.500px solid #7b8595;border-radius:5px;"></div>
<div style="left:27px;top:225px;width:21px;height:21px;border:3.500px solid #7b8595;border-radius:50%;"></div>
<div style="left:27px;top:289px;width:21px;height:21px;border:3.500px solid #7b8595;border-radius:5px;"></div>
<div style="left:27px;top:357px;width:21px;height:21px;border:3.500px solid #7b8595;border-radius:50%;"></div>
<div style="left:27px;top:423px;width:21px;height:21px;border:3.500px solid #7b8595;border-radius:5px;"></div>
<div style="left:103px;top:23px;width:14px;height:14px;border:2.500px solid #9ca3af;border-radius:50%;"></div>
<span class="t" style="left:132px;top:24.53px;font-size:15.52px;color:#9ca3af;letter-spacing:-0.49px;">Search all inboxes</span>
<span class="t" style="left:825px;top:23.53px;font-size:15.52px;color:#374151;font-weight:700;letter-spacing:-0.52px;">Inboxes</span>
<svg style="left:884px;top:26px;" width="12" height="10" viewBox="0 0 12 10"><path d="M2 3 L6 7 L10 3" stroke="#6b7280" stroke-width="2" fill="none"/></svg>
<span class="t" style="left:940px;top:23.53px;font-size:15.52px;color:#374151;font-weight:700;letter-spacing:-0.81px;">Reporting</span>
<span class="t" style="left:1043px;top:23.53px;font-size:15.52px;color:#374151;font-weight:700;letter-spacing:-0.53px;">Settings</span>
<div style="left:1142px;top:21px;width:16px;height:18px;border:2.500px solid #9ca3af;border-radius:8px 8px 3px 3px;"></div>
<div style="left:1193px;top:15px;width:32px;height:32px;background:#4a2f25;border-radius:50%;border:2px solid #d9b8a0;"></div>
<div style="left:78px;top:64px;width:1170px;height:2px;background:#e5e7eb;"></div>
<div style="left:448px;top:66px;width:2px;height:684px;background:#e5e7eb;"></div>
<span class="t" style="left:101px;top:85.7px;font-size:17.25px;color:#111827;font-weight:700;letter-spacing:-0.4px;">Inbox</span>
<span class="t" style="left:160px;top:88.08px;font-size:14.37px;color:#6b7280;letter-spacing:-0.14px;">10 messages</span>
<div style="left:80px;top:127px;width:368px;height:36px;background:#f6f7f9;"></div>
<span class="t" style="left:101px;top:137.08px;font-size:14.37px;color:#6b7280;letter-spacing:0.21px;">Sort by date</span>
<span class="t" style="left:101px;top:183.53px;font-size:15.52px;color:#111827;font-weight:700;letter-spacing:-1.12px;">Leslie Robertson</span>
<span class="t" style="left:391px;top:184.36px;font-size:13.8px;color:#6b7280;letter-spacing:-0.53px;">1d ago</span>
<span class="t" style="left:101px;top:207.08px;font-size:14.37px;color:#374151;letter-spacing:-0.06px;">Refund</span>
<span class="t" style="left:101px;top:230.58px;font-size:14.37px;color:#6f7f9c;letter-spacing:0.11px;">Lorem ipsum dolor sit amet, consectetur</span>
<span class="t" style="left:101px;top:250.08px;font-size:14.37px;color:#6f7f9c;letter-spacing:0.04px;">adipiscing elit. Nunc tempus element…</span>
<div style="left:80px;top:286px;width:368px;height:2px;background:#e5e7eb;"></div>
<div style="left:80px;top:287px;width:368px;height:124px;background:#eef6ff;"></div>
<span class="t" style="left:101px;top:309.53px;font-size:15.52px;color:#111827;font-weight:700;letter-spacing:-1.06px;">Joe Armstrong</span>
<span class="t" style="left:391px;top:310.36px;font-size:13.8px;color:#6b7280;letter-spacing:-0.53px;">1d ago</span>
<span class="t" style="left:101px;top:333.08px;font-size:14.37px;color:#374151;font-weight:700;letter-spacing:-0.62px;">Re: Student Discount?</span>
<span class="t" style="left:101px;top:356.58px;font-size:14.37px;color:#6f7f9c;letter-spacing:0.11px;">Lorem ipsum dolor sit amet, consectetur</span>
<span class="t" style="left:101px;top:376.08px;font-size:14.37px;color:#6f7f9c;letter-spacing:0.04px;">adipiscing elit. Nunc tempus element…</span>
<div style="left:80px;top:412px;width:368px;height:2px;background:#e5e7eb;"></div>
<span class="t" style="left:101px;top:435.53px;font-size:15.52px;color:#111827;font-weight:700;letter-spacing:-1.11px;">Jerome Warren</span>
<span class="t" style="left:391px;top:436.36px;font-size:13.8px;color:#6b7280;letter-spacing:-0.53px;">1d ago</span>
<span class="t" style="left:101px;top:459.08px;font-size:14.37px;color:#374151;font-weight:700;letter-spacing:-0.43px;">Issue with reporting</span>
<span class="t" style="left:101px;top:482.58px;font-size:14.37px;color:#6f7f9c;letter-spacing:0.11px;">Lorem ipsum dolor sit amet, consectetur</span>
<span class="t" style="left:101px;top:502.08px;font-size:14.37px;color:#6f7f9c;letter-spacing:0.04px;">adipiscing elit. Nunc tempus element…</span>
<div style="left:80px;top:538px;width:368px;height:2px;background:#e5e7eb;"></div>
<span class="t" style="left:101px;top:561.53px;font-size:15.52px;color:#111827;font-weight:700;letter-spacing:-1.55px;">Gladys Murphy</span>
<span class="t" style="left:391px;top:562.36px;font-size:13.8px;color:#6b7280;letter-spacing:-0.53px;">1d ago</span>
<span class="t" style="left:101px;top:585.08px;font-size:14.37px;color:#374151;font-weight:700;letter-spacing:-0.69px;">Email not working</span>
<span class="t" style="left:101px;top:608.58px;font-size:14.37px;color:#6f7f9c;letter-spacing:0.11px;">Lorem ipsum dolor sit amet, consectetur</span>
<span class="t" style="left:101px;top:628.08px;font-size:14.37px;color:#6f7f9c;letter-spacing:0.04px;">adipiscing elit. Nunc tempus element…</span>
<div style="left:80px;top:664px;width:368px;height:2px;background:#e5e7eb;"></div>
<span class="t" style="left:101px;top:687.53px;font-size:15.52px;color:#111827;font-weight:700;letter-spacing:-1.05px;">Jorge Murphy</span>
<span class="t" style="left:391px;top:688.36px;font-size:13.8px;color:#6b7280;letter-spacing:-0.53px;">1d ago</span>
<span class="t" style="left:101px;top:711.08px;font-size:14.37px;color:#374151;font-weight:700;letter-spacing:-0.37px;">Not what I expected</span>
<span class="t" style="left:101px;top:734.58px;font-size:14.37px;color:#6f7f9c;letter-spacing:0.11px;">Lorem ipsum dolor sit amet, consectetur</span>
<span class="t" style="left:101px;top:754.08px;font-size:14.37px;color:#6f7f9c;letter-spacing:0.04px;">adipiscing elit. Nunc tempus element…</span>
<div style="left:80px;top:790px;width:368px;height:2px;background:#e5e7eb;"></div>
<div style="left:472px;top:77px;width:99px;height:36px;background:#fff;border:1.500px solid #d5d9df;border-radius:6px 0 0 6px;"></div>
<div style="left:487px;top:88px;width:11px;height:13px;border:2px solid #8a93a3;border-radius:3px;"></div>
<span class="t" style="left:510px;top:87.8px;font-size:14.95px;color:#374151;font-weight:700;letter-spacing:1.46px;">Reply</span>
<div style="left:569px;top:77px;width:89px;height:36px;background:#fff;border:1.500px solid #d5d9df;border-radius:0;"></div>
<div style="left:584px;top:88px;width:11px;height:13px;border:2px solid #8a93a3;border-radius:3px;"></div>
<span class="t" style="left:607px;top:87.8px;font-size:14.95px;color:#374151;font-weight:700;letter-spacing:1.19px;">Note</span>
<div style="left:656px;top:77px;width:109px;height:36px;background:#fff;border:1.500px solid #d5d9df;border-radius:0 6px 6px 0;"></div>
<div style="left:671px;top:88px;width:11px;height:13px;border:2px solid #8a93a3;border-radius:3px;"></div>
<span class="t" style="left:694px;top:87.8px;font-size:14.95px;color:#374151;font-weight:700;letter-spacing:1.36px;">Assign</span>
<div style="left:777px;top:77px;width:109px;height:36px;background:#fff;border:1.500px solid #d5d9df;border-radius:6px;"></div>
<div style="left:792px;top:88px;width:11px;height:13px;border:2px solid #8a93a3;border-radius:3px;"></div>
<span class="t" style="left:815px;top:87.8px;font-size:14.95px;color:#374151;font-weight:700;letter-spacing:0.45px;">Archive</span>
<div style="left:897px;top:77px;width:96px;height:36px;background:#fff;border:1.500px solid #d5d9df;border-radius:6px;"></div>
<div style="left:912px;top:88px;width:11px;height:13px;border:2px solid #8a93a3;border-radius:3px;"></div>
<span class="t" style="left:935px;top:87.8px;font-size:14.95px;color:#374151;font-weight:700;letter-spacing:1.7px;">Move</span>
<div style="left:1119px;top:77px;width:51px;height:36px;background:#fff;border:1.500px solid #d5d9df;border-radius:6px 0 0 6px;"></div>
<div style="left:1169px;top:77px;width:51px;height:36px;background:#fff;border:1.500px solid #d5d9df;border-radius:0 6px 6px 0;"></div>
<svg style="left:1138px;top:89px;" width="14" height="12" viewBox="0 0 14 12"><path d="M2 9 L7 4 L12 9" stroke="#9ca3af" stroke-width="2" fill="none"/></svg>
<svg style="left:1188px;top:89px;" width="14" height="12" viewBox="0 0 14 12"><path d="M2 3 L7 8 L12 3" stroke="#9ca3af" stroke-width="2" fill="none"/></svg>
<div style="left:450px;top:120px;width:798px;height:2px;background:#f0f1f3;"></div>
<span class="t" style="left:474px;top:149.7px;font-size:17.25px;color:#111827;font-weight:700;letter-spacing:0.1px;">Re: Student Discount?</span>
<span class="t" style="left:478px;top:176.08px;font-size:14.37px;color:#6b7280;letter-spacing:0px;">joearmstrong@example.com</span>
<div style="left:1128px;top:160px;width:56px;height:24px;background:#d8f8e4;border-radius:12px;"></div>
<span class="t" style="left:1140px;top:165.64px;font-size:13.22px;color:#2f9e63;font-weight:700;letter-spacing:-0.45px;">Open</span>
<div style="left:1214px;top:165px;width:3px;height:3px;background:#9ca3af;border-radius:50%;"></div>
<div style="left:1214px;top:172px;width:3px;height:3px;background:#9ca3af;border-radius:50%;"></div>
<div style="left:1214px;top:179px;width:3px;height:3px;background:#9ca3af;border-radius:50%;"></div>
<div style="left:450px;top:219px;width:798px;height:531px;background:#f3f4f6;border-top:2px solid #e7e9ec;"></div>
<div style="left:484px;top:250px;width:731px;height:105px;background:#fff;border-radius:9px;box-shadow:0 2px 3px rgba(0,0,0,0.070);"></div>
<span class="t" style="left:506px;top:277.25px;font-size:16.1px;color:#111827;font-weight:700;letter-spacing:-0.3px;">Joe Armstrong</span>
<span class="t" style="left:622px;top:278.58px;font-size:14.37px;color:#6b7280;letter-spacing:0.97px;">wrote</span>
<span class="t" style="left:1054px;top:277.36px;font-size:13.8px;color:#7d8aa5;letter-spacing:0.37px;">Yesterday at 7:24 AM</span>
<div style="left:484px;top:373px;width:731px;height:238px;background:#fff;border-radius:9px;box-shadow:0 2px 3px rgba(0,0,0,0.070);"></div>
<span class="t" style="left:506px;top:400.25px;font-size:16.1px;color:#111827;font-weight:700;letter-spacing:-0.31px;">Monica White</span>
<span class="t" style="left:612px;top:401.58px;font-size:14.37px;color:#6b7280;letter-spacing:0.97px;">wrote</span>
<span class="t" style="left:1054px;top:400.36px;font-size:13.8px;color:#7d8aa5;letter-spacing:0.37px;">Yesterday at 7:24 AM</span>
<div style="left:484px;top:630px;width:731px;height:140px;background:#fff;border-radius:9px;box-shadow:0 2px 3px rgba(0,0,0,0.070);"></div>
<span class="t" style="left:506px;top:657.25px;font-size:16.1px;color:#111827;font-weight:700;letter-spacing:-0.3px;">Joe Armstrong</span>
<span class="t" style="left:622px;top:658.58px;font-size:14.37px;color:#6b7280;letter-spacing:0.97px;">wrote</span>
<span class="t" style="left:1054px;top:657.36px;font-size:13.8px;color:#7d8aa5;letter-spacing:0.37px;">Yesterday at 7:24 AM</span>
<span class="t" style="left:506px;top:313.8px;font-size:14.95px;color:#374151;letter-spacing:-0.01px;">Thanks so much! Can't wait to try it out :)</span>
<span class="t" style="left:506px;top:434.8px;font-size:14.95px;color:#374151;letter-spacing:-0.16px;">Lorem ipsum dolor sit amet, consectetur adipiscing elit.</span>
<span class="t" style="left:506px;top:473.8px;font-size:14.95px;color:#374151;letter-spacing:-0.31px;">Nam malesuada orci id sit aliquam. Eros ac pharetra, sapien purus vitae vestibulum auctor faucibus</span>
<span class="t" style="left:506px;top:493.8px;font-size:14.95px;color:#374151;letter-spacing:-0.13px;">ullamcorper. Leo quam tincidunt porttitor neque, velit sed. Tortor mauris ornare ut tellus sed aliquet amet</span>
<span class="t" style="left:506px;top:512.8px;font-size:14.95px;color:#374151;letter-spacing:-0.22px;">venenatis condimentum. Convallis accumsan et nunc eleifend.</span>
<span class="t" style="left:506px;top:551.8px;font-size:14.95px;color:#111827;font-weight:700;letter-spacing:-0.53px;">Monica White</span>
<span class="t" style="left:506px;top:571.08px;font-size:14.37px;color:#6b7280;letter-spacing:0.11px;">Customer Service</span>
<span class="t" style="left:506px;top:692.8px;font-size:14.95px;color:#374151;letter-spacing:-0.13px;">Lorem ipsum dolor sit amet, consectetur adipiscing elit. Malesuada at ultricies tincidunt elit et, enim.</span>
<span class="t" style="left:506px;top:711.8px;font-size:14.95px;color:#374151;letter-spacing:-0.07px;">Habitant nunc, adipiscing non fermentum, sed est. Aliquet. Lorem in vel libero vel augue aliquet dui</span>
<span class="t" style="left:506px;top:731.8px;font-size:14.95px;color:#374151;letter-spacing:-0.47px;">commodo.</span>
</div>
</section>
<div style="left:1282px;top:1084px;width:446px;height:80px;background:#1b1e2e;box-shadow:0 3px 6px rgba(40,45,80,0.120);"></div>
<svg style="left:1286px;top:1104px;" width="28" height="38" viewBox="0 0 28 38"><circle cx="14" cy="16.500" r="8" stroke="#a06ce4" stroke-width="4" fill="#45188c"/><path d="M14 26.500 V32" stroke="#a06ce4" stroke-width="4" stroke-linecap="round"/></svg>
<span class="t" style="left:1332.6px;top:1108.37px;font-size:28.5px;color:#747994;letter-spacing:0.04px;">Pinned</span>
<div style="left:1437px;top:1100px;width:231px;height:48px;background:#2e3247;border-radius:10px;"></div>
<div style="left:1461px;top:1114px;width:32.5px;height:20px;background:#1fa971;border-radius:10px;"></div>
<div style="left:1479px;top:1118px;width:12px;height:12px;background:#fff;border-radius:50%;"></div>
<span class="t" style="left:1509.2px;top:1110.17px;font-size:28.5px;color:#d0d2e0;letter-spacing:0.98px;-webkit-text-stroke:0.400px #d0d2e0;">Highlights</span>
<div style="left:1676px;top:1100px;width:48px;height:48px;background:#2e3247;border-radius:10px;"></div>
<svg style="left:1684px;top:1108px;" width="32" height="32" viewBox="0 0 32 32"><path d="M5.500 5.500 L26.500 26.500 M26.500 5.500 L5.500 26.500" stroke="#d0d2e0" stroke-width="4" fill="none" stroke-linecap="round"/></svg>
<div style="left:122px;top:1356px;width:1606px;height:28px;background:#fafafa;border-top:1px solid #ededed;"></div>
<div style="left:128px;top:1364px;width:1582px;height:16px;background:#c1c1c1;border-radius:8px;"></div>
<div style="left:1282px;top:244px;width:446px;height:14px;background:linear-gradient(180deg,rgba(60,64,67,0.300),rgba(60,64,67,0.080) 45%,rgba(60,64,67,0));"></div>
</section>
<!-- ===== DevTools ===== -->
<aside id="devtools" style="left:0;top:0;width:2544px;height:1384px">
<div style="left:1730px;top:244px;width:814px;height:160px;background:#eff3f4;"></div>
<div style="left:1730px;top:404px;width:814px;height:926px;background:#fff;"></div>
<div style="left:1728px;top:244px;width:2px;height:1140px;background:#c4c7cc;"></div>
<div style="left:1730px;top:296px;width:814px;height:2px;background:#cbcdd1;"></div>
<svg style="left:1748px;top:256px;" width="30" height="30" viewBox="0 0 30 30"><path d="M11 25.200 H5.500 Q3.200 25.200 3.200 23 V5.500 Q3.200 3.200 5.500 3.200 H23 Q25.200 3.200 25.200 5.500 V10" stroke="#6e6e6e" stroke-width="2.400" fill="none"/><path d="M11.500 11.500 L27 17 L20.800 19.800 L27.800 26.800 L25.800 28.800 L18.800 21.800 L16.500 27.500 Z" fill="#6e6e6e"/></svg>
<svg style="left:1800px;top:252px;" width="34" height="36" viewBox="0 0 34 36"><rect x="10.500" y="3.500" width="20.500" height="28.500" rx="2.500" stroke="#6e6e6e" stroke-width="2.400" fill="#f1f3f4"/><rect x="3.200" y="13.500" width="12" height="19.500" rx="2" stroke="#6e6e6e" stroke-width="2.400" fill="#f1f3f4"/><path d="M3.200 29.800 H15.200" stroke="#6e6e6e" stroke-width="3.500"/></svg>
<div style="left:1854px;top:254.5px;width:2px;height:31px;background:#cbcdd1;"></div>
<span class="t" style="left:1891.5px;top:258.78px;font-size:24px;color:#5f6368;letter-spacing:-0.01px;-webkit-text-stroke:0.300px #5f6368;">Elements</span>
<span class="t" style="left:2036.6px;top:258.78px;font-size:24px;color:#202124;letter-spacing:0.28px;-webkit-text-stroke:0.300px #202124;">Console</span>
<div style="left:2014px;top:294.5px;width:136px;height:3.5px;background:#1a73e8;"></div>
<svg style="left:2166px;top:260px;" width="22" height="20" viewBox="0 0 22 20"><path d="M3 3 L10.200 10.200 L3 17.400 M10.800 3 L18 10.200 L10.800 17.400" stroke="#6e6e6e" stroke-width="2.800" fill="none"/></svg>
<div style="left:2286.5px;top:252px;width:71px;height:36.5px;border:2px solid #cbcdd1;border-radius:6px;"></div>
<svg style="left:2300px;top:258.5px;" width="24" height="23" viewBox="0 0 24 23"><path d="M4.500 0.500 H19.500 Q23 0.500 23 4 V14 Q23 17.500 19.500 17.500 H6.500 L1 22.500 V4 Q1 0.500 4.500 0.500 Z" fill="#1a73e8"/><path d="M5.500 6.700 H18.500 M5.500 11.500 H13.500" stroke="#fff" stroke-width="2.200"/></svg>
<span class="t" style="left:2330.5px;top:258.48px;font-size:24px;color:#5f6368;-webkit-text-stroke:0.300px #5f6368;">3</span>
<div style="left:2370px;top:254.5px;width:2px;height:31px;background:#cbcdd1;"></div>
<svg style="left:2391px;top:253px;" width="34" height="34" viewBox="0 0 24 24"><path d="M19.43 12.98c.04-.32.07-.64.07-.98s-.03-.66-.07-.98l2.11-1.65c.19-.15.24-.42.12-.64l-2-3.46c-.12-.22-.39-.3-.61-.22l-2.49 1c-.52-.4-1.08-.73-1.69-.98l-.38-2.65C14.46 2.18 14.25 2 14 2h-4c-.25 0-.46.18-.49.42l-.38 2.65c-.61.25-1.17.59-1.69.98l-2.49-1c-.23-.09-.49 0-.61.22l-2 3.46c-.13.22-.07.49.12.64l2.11 1.65c-.04.32-.07.65-.07.98s.03.66.07.98l-2.11 1.65c-.19.15-.24.42-.12.64l2 3.46c.12.22.39.3.61.22l2.49-1c.52.4 1.08.73 1.69.98l.38 2.65c.03.24.24.42.49.42h4c.25 0 .46-.18.49-.42l.38-2.65c.61-.25 1.17-.59 1.69-.98l2.49 1c.23.09.49 0 .61-.22l2-3.46c.12-.22.07-.49-.12-.64l-2.11-1.65zM12 15.5c-1.93 0-3.5-1.57-3.5-3.5s1.570-3.5 3.5-3.5 3.5 1.570 3.5 3.5-1.570 3.5-3.5 3.5z" fill="#6e6e6e"/></svg>
<div style="left:2462px;top:258px;width:6px;height:6px;background:#6e6e6e;border-radius:50%;"></div>
<div style="left:2462px;top:268px;width:6px;height:6px;background:#6e6e6e;border-radius:50%;"></div>
<div style="left:2462px;top:278px;width:6px;height:6px;background:#6e6e6e;border-radius:50%;"></div>
<svg style="left:2508px;top:258px;" width="24" height="24" viewBox="0 0 24 24"><path d="M3 3 L21 21 M21 3 L3 21" stroke="#6e6e6e" stroke-width="3.400" fill="none"/></svg>
<svg style="left:1744px;top:310px;" width="34" height="30" viewBox="0 0 34 30"><rect x="2.800" y="3" width="28" height="24" stroke="#6e6e6e" stroke-width="2.400" fill="none"/><path d="M11.200 3 V27" stroke="#6e6e6e" stroke-width="2.400"/><path d="M16.500 8.500 L25 15 L16.500 21.500 Z" fill="#6e6e6e"/></svg>
<svg style="left:1803px;top:309px;" width="32" height="32" viewBox="0 0 32 32"><circle cx="16" cy="16" r="11.200" stroke="#6e6e6e" stroke-width="3.500" fill="none"/><path d="M8.200 8.200 L23.800 23.800" stroke="#6e6e6e" stroke-width="3.500"/></svg>
<div style="left:1854px;top:308px;width:2px;height:32px;background:#cbcdd1;"></div>
<span class="t" style="left:1873.5px;top:312.18px;font-size:24px;color:#5f6368;letter-spacing:1.21px;-webkit-text-stroke:0.300px #5f6368;">top</span>
<svg style="left:1921.5px;top:318.5px;" width="15" height="11" viewBox="0 0 15 11"><path d="M0.300 0.300 H14.700 L7.500 10.700 Z" fill="#6e6e6e"/></svg>
<div style="left:1954px;top:308px;width:2px;height:32px;background:#cbcdd1;"></div>
<svg style="left:1974px;top:306.5px;" width="36" height="36" viewBox="0 0 24 24"><path d="M12 4.5C7 4.5 2.730 7.610 1 12c1.730 4.390 6 7.500 11 7.500s9.270-3.110 11-7.500c-1.730-4.390-6-7.500-11-7.500zM12 17c-2.760 0-5-2.240-5-5s2.240-5 5-5 5 2.240 5 5-2.240 5-5 5zm0-8c-1.660 0-3 1.340-3 3s1.340 3 3 3 3-1.340 3-3-1.340-3-3-3z" fill="#6e6e6e"/></svg>
<div style="left:2027.5px;top:308px;width:2px;height:32px;background:#cbcdd1;"></div>
<div style="left:2042px;top:303.5px;width:419.5px;height:41px;background:#fff;border:2px solid #e3e5e8;"></div>
<span class="t" style="left:2050.5px;top:313.78px;font-size:24px;color:#6b6f74;letter-spacing:0.28px;-webkit-text-stroke:0.300px #6b6f74;">Filter</span>
<div style="left:2482px;top:308px;width:2px;height:32px;background:#cbcdd1;"></div>
<svg style="left:2503px;top:307px;" width="34" height="34" viewBox="0 0 24 24"><path d="M19.43 12.98c.04-.32.07-.64.07-.98s-.03-.66-.07-.98l2.11-1.65c.19-.15.24-.42.12-.64l-2-3.46c-.12-.22-.39-.3-.61-.22l-2.49 1c-.52-.4-1.08-.73-1.69-.98l-.38-2.65C14.46 2.18 14.25 2 14 2h-4c-.25 0-.46.18-.49.42l-.38 2.65c-.61.25-1.17.59-1.69.98l-2.49-1c-.23-.09-.49 0-.61.22l-2 3.46c-.13.22-.07.49.12.64l2.11 1.65c-.04.32-.07.65-.07.98s.03.66.07.98l-2.11 1.65c-.19.15-.24.42-.12.64l2 3.46c.12.22.39.3.61.22l2.49-1c.52.4 1.08.73 1.69.98l.38 2.65c.03.24.24.42.49.42h4c.25 0 .46-.18.49-.42l.38-2.65c.61-.25 1.17-.59 1.69-.98l2.49 1c.23.09.49 0 .61-.22l2-3.46c.12-.22.07-.49-.12-.64l-2.11-1.65zM12 15.5c-1.93 0-3.5-1.57-3.5-3.5s1.570-3.5 3.5-3.5 3.5 1.570 3.5 3.5-1.570 3.5-3.5 3.5z" fill="#6e6e6e"/></svg>
<span class="t" style="left:1746.2px;top:364.68px;font-size:24px;color:#5f6368;letter-spacing:0.03px;-webkit-text-stroke:0.300px #5f6368;">Default levels</span>
<svg style="left:1898.5px;top:370.5px;" width="15" height="11" viewBox="0 0 15 11"><path d="M0.300 0.300 H14.700 L7.500 10.700 Z" fill="#6e6e6e"/></svg>
<div style="left:1933px;top:360.5px;width:2px;height:31px;background:#cbcdd1;"></div>
<div style="left:1943px;top:358.5px;width:186px;height:36px;border:2px solid #cbcdd1;border-radius:5px;"></div>
<span class="t" style="left:1962.3px;top:364.68px;font-size:24px;color:#5f6368;letter-spacing:-0.01px;-webkit-text-stroke:0.300px #5f6368;">3 Issues:</span>
<svg style="left:2071.5px;top:364.5px;" width="24" height="23" viewBox="0 0 24 23"><path d="M4.500 0.500 H19.500 Q23 0.500 23 4 V14 Q23 17.500 19.500 17.500 H6.500 L1 22.500 V4 Q1 0.500 4.500 0.500 Z" fill="#1a73e8"/><path d="M5.500 6.700 H18.500 M5.500 11.500 H13.500" stroke="#fff" stroke-width="2.200"/></svg>
<span class="t" style="left:2101.8px;top:364.68px;font-size:24px;color:#5f6368;-webkit-text-stroke:0.300px #5f6368;">3</span>
<div style="left:1730px;top:402px;width:814px;height:2px;background:#cbcdd1;"></div>
<section id="console-messages" style="left:1730px;top:404px;width:814px;height:926px">
</section>
<span class="t mono" style="left:1777.6px;top:413.99px;font-size:22px;color:#5f6368;font-style:italic;letter-spacing:-0.01px;">Console was cleared</span>
<a class="t mono" style="left:2190.4px;top:413.19px;font-size:22px;color:#5f6368;letter-spacing:-0.01px;text-decoration:underline;text-decoration-thickness:2px;text-underline-offset:3px;">index.fd56be2f.js:65036</a>
<div style="left:1730px;top:442px;width:814px;height:2px;background:#f0f0f0;"></div>
<span class="t mono" style="left:1777.6px;top:451.89px;font-size:22px;color:#2f3b47;font-weight:700;letter-spacing:-0.01px;">Command:</span>
<span class="t mono" style="left:1950px;top:451.89px;font-size:22px;color:#2f3b47;">eq</span>
<a class="t mono" style="left:2190.4px;top:451.09px;font-size:22px;color:#5f6368;letter-spacing:-0.01px;text-decoration:underline;text-decoration-thickness:2px;text-underline-offset:3px;">index.fd56be2f.js:65029</a>
<div style="left:1730px;top:481px;width:814px;height:2px;background:#f0f0f0;"></div>
<span class="t mono" style="left:1777.6px;top:490.89px;font-size:22px;color:#2f3b47;font-weight:700;letter-spacing:-0.01px;">Selector:</span>
<span class="t mono" style="left:1950px;top:490.89px;font-size:22px;color:#2f3b47;">1</span>
<a class="t mono" style="left:2190.4px;top:490.09px;font-size:22px;color:#5f6368;letter-spacing:-0.01px;text-decoration:underline;text-decoration-thickness:2px;text-underline-offset:3px;">index.fd56be2f.js:65029</a>
<div style="left:1730px;top:519px;width:814px;height:2px;background:#f0f0f0;"></div>
<span class="t mono" style="left:1777.6px;top:528.89px;font-size:22px;color:#2f3b47;font-weight:700;letter-spacing:-0.01px;">Applied to:</span>
<a class="t mono" style="left:2190.4px;top:528.09px;font-size:22px;color:#5f6368;letter-spacing:-0.01px;text-decoration:underline;text-decoration-thickness:2px;text-underline-offset:3px;">index.fd56be2f.js:65029</a>
<div style="left:1778px;top:554px;width:351px;height:192px;background:#fff;border:4px solid #1a73e8;"></div>
<svg style="left:1779.5px;top:566px;" width="15" height="11" viewBox="0 0 15 11"><path d="M0.300 0.300 H14.700 L7.500 10.700 Z" fill="#5f6368"/></svg>
<span class="t mono" style="left:1800.3px;top:557.79px;font-size:22px;color:#202124;font-style:italic;letter-spacing:-0.01px;">(3) [<span style="color:#881280">dt</span>, <span style="color:#881280">dt</span>, <span style="color:#881280">dt</span>]</span>
<div style="left:2024px;top:557.5px;width:22px;height:21.5px;background:#4285f4;border-radius:5px;"></div>
<span class="t mono" style="left:2028.5px;top:559.48px;font-size:20px;color:#fff;font-weight:700;font-style:italic;">i</span>
<svg style="left:1805px;top:594.3px;" width="12" height="15" viewBox="0 0 12 15"><path d="M0.500 0.500 L11.500 7.500 L0.500 14.500 Z" fill="#5f6368"/></svg>
<span class="t mono" style="left:1824px;top:590.89px;font-size:22px;color:#202124;letter-spacing:-0.01px;"><b style="color:#881280;font-weight:700">0</b>: <span style="color:#881280">dt</span></span>
<svg style="left:1805px;top:626.5px;" width="12" height="15" viewBox="0 0 12 15"><path d="M0.500 0.500 L11.500 7.500 L0.500 14.500 Z" fill="#5f6368"/></svg>
<span class="t mono" style="left:1824px;top:623.09px;font-size:22px;color:#202124;letter-spacing:-0.01px;"><b style="color:#881280;font-weight:700">1</b>: <span style="color:#881280">dt</span></span>
<svg style="left:1805px;top:658.7px;" width="12" height="15" viewBox="0 0 12 15"><path d="M0.500 0.500 L11.500 7.500 L0.500 14.500 Z" fill="#5f6368"/></svg>
<span class="t mono" style="left:1824px;top:655.29px;font-size:22px;color:#202124;letter-spacing:-0.01px;"><b style="color:#881280;font-weight:700">2</b>: <span style="color:#881280">dt</span></span>
<span class="t mono" style="left:1824px;top:686.59px;font-size:22px;color:#202124;letter-spacing:-0.01px;"><b style="color:#c489c0;font-weight:700">length</b>: <span style="color:#1c1ca8">3</span></span>
<svg style="left:1805px;top:722.2px;" width="12" height="15" viewBox="0 0 12 15"><path d="M0.500 0.500 L11.500 7.500 L0.500 14.500 Z" fill="#5f6368"/></svg>
<span class="t mono" style="left:1825.4px;top:718.79px;font-size:22px;color:#202124;letter-spacing:-0.09px;"><span style="color:#5f6368">[[Prototype]]</span>: Array(0)</span>
<div style="left:1730px;top:750px;width:814px;height:2px;background:#f0f0f0;"></div>
<span class="t mono" style="left:1777.6px;top:759.89px;font-size:22px;color:#2f3b47;font-weight:700;letter-spacing:-0.01px;">Yielded:</span>
<a class="t mono" style="left:2190.4px;top:759.09px;font-size:22px;color:#5f6368;letter-spacing:-0.01px;text-decoration:underline;text-decoration-thickness:2px;text-underline-offset:3px;">index.fd56be2f.js:65029</a>
<svg style="left:1789.8px;top:790.5px;" width="12" height="15" viewBox="0 0 12 15"><path d="M0.500 0.500 L11.500 7.500 L0.500 14.500 Z" fill="#5f6368"/></svg>
<span class="t mono" style="left:1806px;top:789.69px;font-size:22px;color:#202124;letter-spacing:-0.01px;"><span style="color:#881280">&lt;dt&gt;</span>…<span style="color:#881280">&lt;/dt&gt;</span></span>
<div style="left:1730px;top:822px;width:814px;height:2px;background:#f0f0f0;"></div>
<span class="t mono" style="left:1777.6px;top:831.79px;font-size:22px;color:#2f3b47;font-weight:700;letter-spacing:-0.01px;">Elements:</span>
<span class="t mono" style="left:1950px;top:831.79px;font-size:22px;color:#1c1ca8;">1</span>
<a class="t mono" style="left:2190.4px;top:830.99px;font-size:22px;color:#5f6368;letter-spacing:-0.01px;text-decoration:underline;text-decoration-thickness:2px;text-underline-offset:3px;">index.fd56be2f.js:65029</a>
<div style="left:1730px;top:858px;width:814px;height:2px;background:#f0f0f0;"></div>
<svg style="left:1745px;top:870px;" width="18" height="20" viewBox="0 0 18 20"><path d="M5.500 3.500 L12.800 10 L5.500 16.500" stroke="#3b78e7" stroke-width="3.400" fill="none"/></svg>
<div style="left:1730px;top:1330px;width:814px;height:2px;background:#cbcdd1;"></div>
<div style="left:1730px;top:1332px;width:814px;height:52px;background:#eff3f4;"></div>
<div style="left:1759.8px;top:1346.2px;width:6px;height:6px;background:#6e6e6e;border-radius:50%;"></div>
<div style="left:1759.8px;top:1356px;width:6px;height:6px;background:#6e6e6e;border-radius:50%;"></div>
<div style="left:1759.8px;top:1365.8px;width:6px;height:6px;background:#6e6e6e;border-radius:50%;"></div>
<span class="t" style="left:1804.6px;top:1346.48px;font-size:24px;color:#333;letter-spacing:0.28px;-webkit-text-stroke:0.300px #333;">Console</span>
<div style="left:1786px;top:1382.6px;width:128px;height:1.4px;background:#1a73e8;"></div>
<svg style="left:2508px;top:1346px;" width="24" height="24" viewBox="0 0 24 24"><path d="M3 3 L21 21 M21 3 L3 21" stroke="#6e6e6e" stroke-width="3.400" fill="none"/></svg>
<div style="left:1730px;top:244px;width:814px;height:12px;background:linear-gradient(180deg,rgba(60,64,67,0.340),rgba(60,64,67,0.100) 45%,rgba(60,64,67,0));"></div>
</aside>
</div>
</body>
</html>
